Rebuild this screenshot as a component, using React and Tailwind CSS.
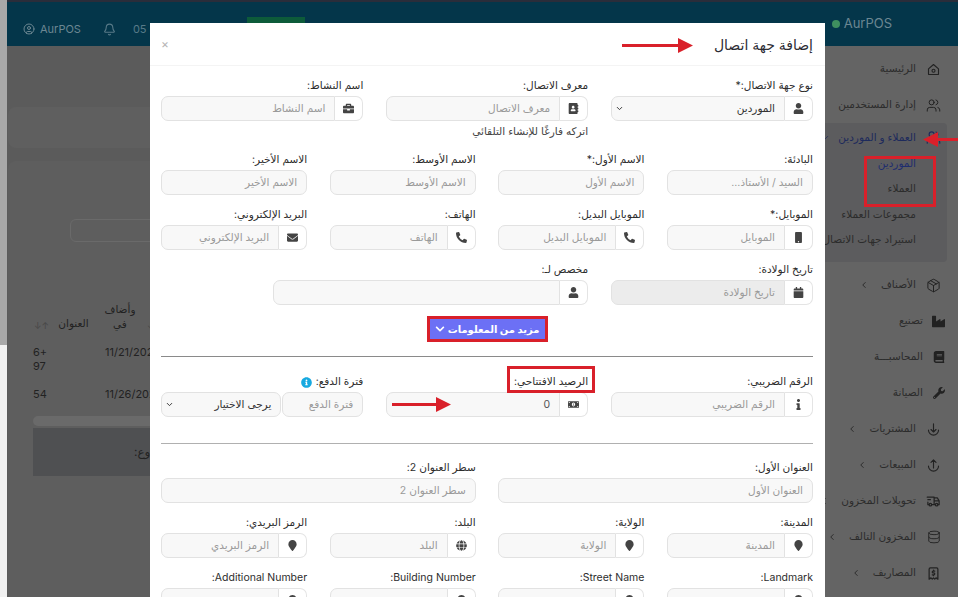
import React from "react";
import { Users, Package, Database, ChevronLeft, ChevronDown, Bell, CircleUser } from "lucide-react";
import {
  FaUser, FaBriefcase, FaAddressBook, FaMobile, FaPhoneAlt, FaEnvelope, FaCalendar, FaInfo,
  FaMoneyBillAlt, FaMapMarker, FaGlobe, FaInfoCircle, FaIndustry, FaBook, FaWrench, FaChevronDown,
} from "react-icons/fa";
import { TbTruckDelivery, TbReceipt2 } from "react-icons/tb";

const HomeIcon = ({ className }) => (
  <svg viewBox="0 0 24 24" fill="none" stroke="currentColor" strokeWidth="1.8" strokeLinejoin="round" className={className}>
    <path d="M4 11 12 4l8 7v8a1 1 0 0 1-1 1H5a1 1 0 0 1-1-1z" />
    <circle cx="12" cy="14" r="2.4" />
  </svg>
);

const ArcArrow = ({ className, up }) => (
  <svg viewBox="0 0 24 24" fill="none" stroke="currentColor" strokeWidth="1.8" strokeLinecap="round" strokeLinejoin="round" className={className}>
    <path d="M4 13a8 8 0 0 0 16 0" />
    {up ? <path d="M12 16V3M8 7l4-4 4 4" /> : <path d="M12 3v13M8 12l4 4 4-4" />}
  </svg>
);

const menuTop = [
  { label: "الرئيسية", icon: <HomeIcon className="w-[15px] h-[15px]" /> },
  { label: "إدارة المستخدمين", icon: <Users className="w-[15px] h-[15px]" strokeWidth={1.6} />, arrow: true },
];

const menuBottom = [
  { label: "الأصناف", icon: <Package className="w-[15px] h-[15px]" strokeWidth={1.6} />, arrow: true },
  { label: "تصنيع", icon: <FaIndustry className="w-[13px] h-[13px]" />, inset: true },
  { label: "المحاسبـــة", icon: <FaBook className="w-[12px] h-[12px]" />, inset: true },
  { label: "الصيانة", icon: <FaWrench className="w-[12px] h-[12px]" />, inset: true },
  { label: "المشتريات", icon: <ArcArrow className="w-[15px] h-[15px]" />, arrow: true },
  { label: "المبيعات", icon: <ArcArrow up className="w-[15px] h-[15px]" />, arrow: true },
  { label: "تحويلات المخزون", icon: <TbTruckDelivery className="w-[15px] h-[15px]" />, arrow: true },
  { label: "المخزون التالف", icon: <Database className="w-[14px] h-[14px]" strokeWidth={1.6} />, arrow: true },
  { label: "المصاريف", icon: <TbReceipt2 className="w-[15px] h-[15px]" />, arrow: true },
];

const MenuItem = ({ item }) => (
  <div className={`h-[36px] flex items-center text-[10.5px] text-[#2c2c2c] ${item.inset ? "pr-[12px]" : "pr-[17px]"}`}>
    <span className="w-[15px] flex justify-center shrink-0 text-[#222]">{item.icon}</span>
    <span className={`${item.inset ? "mr-[8px]" : "mr-[10px]"} whitespace-nowrap`}>{item.label}</span>
    {item.arrow && <ChevronLeft className="w-[10px] h-[10px] mr-[12px] text-[#222]" />}
  </div>
);

const Sidebar = () => (
  <aside dir="rtl" className="w-[160px] shrink-0 bg-[#646464] pt-[5px] overflow-hidden">
    {menuTop.map((item) => <MenuItem key={item.label} item={item} />)}
    <div className="mr-[11px] h-[139px] bg-[#5c5c5e] rounded-[4px] pr-[6px]">
      <div className="h-[28px] flex items-center text-[10.5px] text-[#1d2a5c] whitespace-nowrap pt-[1px]">
        <Users className="w-[15px] h-[15px] shrink-0" strokeWidth={1.8} />
        <span className="mr-[10px]">العملاء و الموردين</span>
        <ChevronDown className="w-[9px] h-[9px] mr-[8px]" />
      </div>
      <div className="pr-[25px] text-[10.5px] leading-[25.3px] whitespace-nowrap text-[#2c2c2c]">
        <div className="text-[#1f2d6e]">الموردين</div>
        <div>العملاء</div>
        <div>مجموعات العملاء</div>
        <div>استيراد جهات الاتصال</div>
      </div>
    </div>
    <div className="mt-[5px]">
      {menuBottom.map((item) => <MenuItem key={item.label} item={item} />)}
    </div>
  </aside>
);

const Background = () => (
  <div className="flex-1 min-w-0 bg-[#5b5b5b] overflow-hidden pl-[1px] pt-[61px]">
    <div className="h-[41px] rounded-[8px] bg-[#5f5f5f]" />
    <div className="mt-[13px] h-[440px] rounded-[8px] bg-[#5e5e5e] pt-[58px] pl-[25px]">
      <div className="ml-[37px] h-[23px] w-[400px] rounded-[6px] border border-[#6a6a6a]" />
      <div className="mt-[23px] w-[500px] text-[11px] text-[#222]">
        <div className="h-[75px] flex items-end pb-[8px]">
          <span className="w-[17px] text-center text-[9px] text-[#484848]">↓↑</span>
          <div dir="rtl" className="w-[47px] text-center text-[10.5px]">العنوان</div>
          <div dir="rtl" className="w-[44px] ml-[1px] text-center text-[10.5px] leading-[15px]">وأضاف<br />في</div>
          <span className="ml-[5px] text-[9px] text-[#484848]">↓↑</span>
        </div>
        <div className="h-[40px] flex pt-[5px] leading-[14px]">
          <span className="w-[72px]">6+<br />97</span>
          <span>11/21/2024</span>
        </div>
        <div className="h-[36px] flex pt-[7px] leading-[14px]">
          <span className="w-[72px]">54</span>
          <span>11/26/2024</span>
        </div>
        <div className="h-[10px] rounded-full bg-[#6a6a6a]" />
        <div className="mt-[2px] h-[48px] bg-[#4f5052] flex items-center pl-[101px] text-[12px]">
          <span dir="rtl" className="whitespace-nowrap">وع:</span>
        </div>
      </div>
    </div>
  </div>
);

const Header = () => (
  <header className="h-[46px] shrink-0 bg-[#04364a] border-t-2 border-[#2a2d3a] flex items-center text-[#587a88] text-[11px]">
    <div className="ml-[16px] mt-[10px] flex items-center gap-[5px] text-[#6c8792]">
      <CircleUser className="w-[12px] h-[12px]" />
      <span>AurPOS</span>
    </div>
    <Bell className="ml-[22px] mt-[10px] w-[13px] h-[13px]" />
    <span className="ml-[17px] mt-[10px]">05</span>
    <div className="ml-[100px] w-[58px] h-[29px] self-end bg-[#0d5b3a]" />
    <div className="flex-1" />
    <div className="mr-[66px] flex items-center gap-[4px] text-[13px] text-[#6c8792]">
      <span className="w-[8px] h-[8px] rounded-full bg-[#3f8f5f]" />
      <span>AurPOS</span>
    </div>
  </header>
);

const spans = { 3: "col-span-3", 4: "col-span-4", 6: "col-span-6" };

const labelCls = "block h-[20px] leading-[20px] text-[10.5px] text-[#2d2d2d] whitespace-nowrap";

const Addon = ({ Icon }) => (
  <span className="w-[28px] shrink-0 flex items-center justify-center border border-l-0 border-[#e4e4e4] rounded-r-[7px] text-[#444]">
    <Icon className="w-[11px] h-[11px]" />
  </span>
);

const Field = ({ span, label, placeholder, Icon, value, disabled }) => (
  <div className={spans[span]}>
    <div className={labelCls}>{label}</div>
    <div className="flex h-[25px]">
      {Icon && <Addon Icon={Icon} />}
      <div className={`flex-1 min-w-0 px-[9px] flex items-center border border-[#e2e2e2] text-[10.5px] whitespace-nowrap overflow-hidden ${value ? "text-[#555]" : "text-[#9a9a9a]"} ${disabled ? "bg-[#ececec]" : "bg-[#f8f8f8]"} ${Icon ? "rounded-l-[7px]" : "rounded-[7px]"}`}>
        {value || placeholder}
      </div>
    </div>
  </div>
);

const Select = ({ value, className = "" }) => (
  <div className={`flex-1 min-w-0 px-[9px] pl-[3px] flex items-center justify-between bg-[#f8f8f8] border border-[#e2e2e2] text-[10.5px] text-[#333] whitespace-nowrap ${className}`}>
    <span>{value}</span>
    <ChevronDown className="w-[9px] h-[9px] text-[#333]" strokeWidth={2.5} />
  </div>
);

const Row = ({ children, className = "" }) => (
  <div className={`grid grid-cols-12 gap-x-[22.5px] ${className}`}>{children}</div>
);

const Modal = () => (
  <div dir="rtl" className="absolute left-[150px] top-[23px] w-[675px] h-[574px] bg-white overflow-hidden">
    <div className="h-[43px] pl-[11px] pr-[12px] flex items-center justify-between border-b border-[#f4f4f4]">
      <h2 className="text-[14px] text-[#2b2b33]">إضافة جهة اتصال</h2>
      <span className="text-[12px] text-[#b5b5b5]">×</span>
    </div>
    <div className="pl-[11px] pr-[12px] pt-[10px]">
      <Row>
        <div className="col-span-4">
          <div className={labelCls}>نوع جهة الاتصال:*</div>
          <div className="flex h-[25px]">
            <Addon Icon={FaUser} />
            <Select value="الموردين" className="rounded-l-[7px]" />
          </div>
        </div>
        <Field span={4} label="معرف الاتصال:" placeholder="معرف الاتصال" Icon={FaAddressBook} />
        <Field span={4} label="اسم النشاط:" placeholder="اسم النشاط" Icon={FaBriefcase} />
      </Row>
      <Row className="h-[29px]">
        <div className="col-start-5 col-span-4 text-[10.5px] text-[#444] leading-[22px] whitespace-nowrap">اتركه فارغًا للإنشاء التلقائي</div>
      </Row>
      <Row>
        <Field span={3} label="البادئة:" placeholder="السيد / الأستاذ..." />
        <Field span={3} label="الاسم الأول:*" placeholder="الاسم الأول" />
        <Field span={3} label="الاسم الأوسط:" placeholder="الاسم الأوسط" />
        <Field span={3} label="الاسم الأخير:" placeholder="الاسم الأخير" />
      </Row>
      <Row className="mt-[10px]">
        <Field span={3} label="الموبايل:*" placeholder="الموبايل" Icon={FaMobile} />
        <Field span={3} label="الموبايل البديل:" placeholder="الموبايل البديل" Icon={FaPhoneAlt} />
        <Field span={3} label="الهاتف:" placeholder="الهاتف" Icon={FaPhoneAlt} />
        <Field span={3} label="البريد الإلكتروني:" placeholder="البريد الإلكتروني" Icon={FaEnvelope} />
      </Row>
      <Row className="mt-[10px]">
        <Field span={4} label="تاريخ الولادة:" placeholder="تاريخ الولادة" Icon={FaCalendar} disabled />
        <Field span={6} label="مخصص لـ:" Icon={FaUser} />
      </Row>
      <div className="mt-[11px] flex justify-center">
        <button className="h-[26px] w-[121px] border-[3px] border-[#d9202a] bg-[#6c70f5] text-white text-[10px] font-bold flex items-center justify-center gap-[3px] whitespace-nowrap">
          مزيد من المعلومات
          <FaChevronDown className="w-[10px] h-[10px]" />
        </button>
      </div>
      <hr className="mt-[14px] border-[#8a8a8a]" />
      <Row className="mt-[15px]">
        <Field span={4} label="الرقم الضريبي:" placeholder="الرقم الضريبي" Icon={FaInfo} />
        <Field span={4} label="الرصيد الافتتاحي:" value="0" Icon={FaMoneyBillAlt} />
        <div className="col-span-4">
          <div className="h-[20px] leading-[20px] text-[10.5px] text-[#2d2d2d] flex items-center gap-[4px]">
            فترة الدفع:
            <FaInfoCircle className="w-[11px] h-[11px] text-[#17a9e0]" />
          </div>
          <div className="flex h-[25px] gap-[1px]">
            <div className="w-[81px] shrink-0 px-[9px] flex items-center bg-[#f8f8f8] border border-[#e2e2e2] rounded-[7px] text-[10.5px] text-[#9a9a9a] whitespace-nowrap">فترة الدفع</div>
            <Select value="يرجى الاختيار" className="rounded-[7px]" />
          </div>
        </div>
      </Row>
      <hr className="mt-[26px] border-[#b0b0b0]" />
      <Row className="mt-[14px]">
        <Field span={6} label="العنوان الأول:" placeholder="العنوان الأول" />
        <Field span={6} label="سطر العنوان 2:" placeholder="سطر العنوان 2" />
      </Row>
      <Row className="mt-[10px]">
        <Field span={3} label="المدينة:" placeholder="المدينة" Icon={FaMapMarker} />
        <Field span={3} label="الولاية:" placeholder="الولاية" Icon={FaMapMarker} />
        <Field span={3} label="البلد:" placeholder="البلد" Icon={FaGlobe} />
        <Field span={3} label="الرمز البريدي:" placeholder="الرمز البريدي" Icon={FaMapMarker} />
      </Row>
      <Row className="mt-[10px]">
        <Field span={3} label="Landmark:" Icon={FaMapMarker} />
        <Field span={3} label="Street Name:" Icon={FaMapMarker} />
        <Field span={3} label="Building Number:" Icon={FaMapMarker} />
        <Field span={3} label="Additional Number:" Icon={FaMapMarker} />
      </Row>
    </div>
  </div>
);

// red annotation arrows drawn over the screenshot, head is always 15x15
const Arrow = ({ className, w, flip }) => (
  <svg width={w} height="15" viewBox={`0 0 ${w} 15`} className={`absolute ${className}`}>
    <path d={flip ? `M${w} 6H15V0L0 7.5 15 15V9H${w}z` : `M0 6H${w - 15}V0L${w} 7.5 ${w - 15} 15V9H0z`} fill="#d9202a" />
  </svg>
);

export default function App() {
  return (
    <div className="relative isolate w-[961px] h-[597px] overflow-hidden bg-white flex font-['Inter','DejaVu_Sans',sans-serif]">
      <div className="w-[7px] shrink-0 flex flex-col">
        <div className="h-[345px] bg-[#a8a8a8]" />
        <div className="flex-1 bg-[#f1f1f1]" />
      </div>
      <div className="flex-1 min-w-0 flex flex-col">
        <Header />
        <div className="flex-1 min-h-0 flex">
          <Background />
          <Sidebar />
        </div>
      </div>
      <div className="w-[3px] shrink-0 bg-white" />

      <Modal />

      <Arrow w={71} className="left-[622px] top-[38px]" />
      <Arrow w={59} className="left-[392px] top-[397px]" />
      <Arrow w={35} flip className="left-[923px] top-[132px]" />
      <div className="absolute left-[864px] top-[156px] w-[72px] h-[51px] border-[3px] border-[#d9202a]" />
      <div className="absolute left-[507px] top-[366px] w-[88px] h-[27px] border-[3px] border-[#d9202a]" />
    </div>
  );
}
